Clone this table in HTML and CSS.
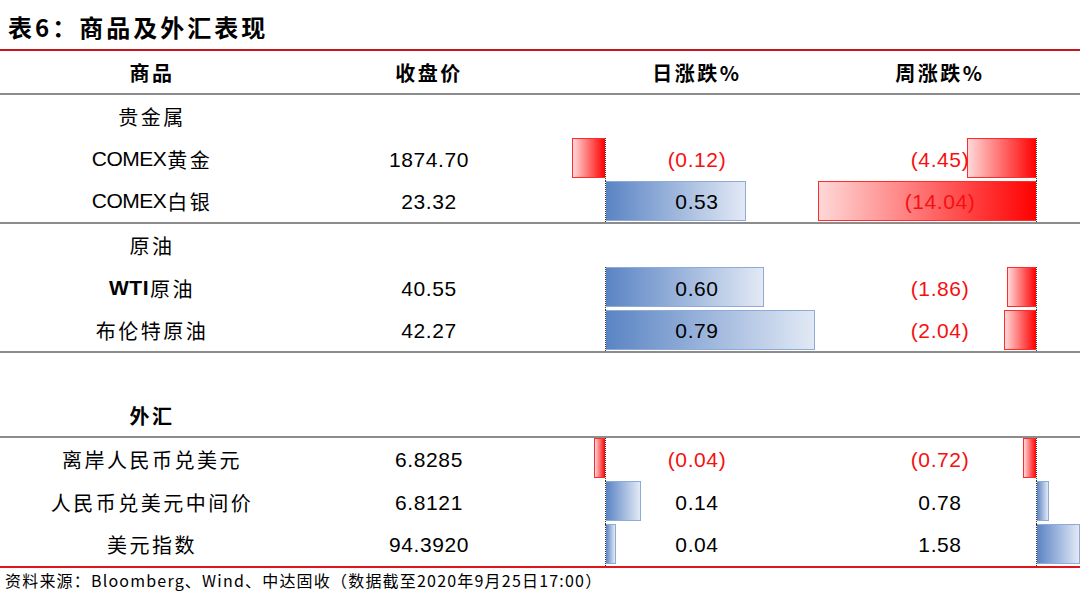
FILE: index.html
```html
<!DOCTYPE html>
<html lang="zh-CN">
<head>
<meta charset="utf-8">
<title>表6：商品及外汇表现</title>
<link rel="stylesheet" href="styles.css">
</head>
<body>
<div class="page">
  <div class="title">表6：商品及外汇表现</div>
  <div class="table">
    <div class="row head sep">
      <div class="c c1">商品</div>
      <div class="c c2">收盘价</div>
      <div class="c c3">日涨跌%</div>
      <div class="c c4">周涨跌%</div>
    </div>

    <div class="row">
      <div class="c c1 label">贵金属</div>
      <div class="c c2"></div><div class="c c3"></div><div class="c c4"></div>
    </div>
    <div class="row">
      <div class="c c1 label"><span class="lat">COMEX</span>黄金</div>
      <div class="c c2 num">1874.70</div>
      <div class="c c3 num red"><span class="axis"><span class="bar neg" style="width:33px"></span></span><span class="v">(0.12)</span></div>
      <div class="c c4 num red"><span class="axis"><span class="bar neg" style="width:69px"></span></span><span class="v">(4.45)</span></div>
    </div>
    <div class="row sep">
      <div class="c c1 label"><span class="lat">COMEX</span>白银</div>
      <div class="c c2 num">23.32</div>
      <div class="c c3 num"><span class="axis"><span class="bar pos" style="width:140px"></span></span><span class="v">0.53</span></div>
      <div class="c c4 num red"><span class="axis"><span class="bar neg" style="width:218px"></span></span><span class="v">(14.04)</span></div>
    </div>

    <div class="row">
      <div class="c c1 label">原油</div>
      <div class="c c2"></div><div class="c c3"></div><div class="c c4"></div>
    </div>
    <div class="row">
      <div class="c c1 label"><span class="lat bold">WTI</span>原油</div>
      <div class="c c2 num">40.55</div>
      <div class="c c3 num"><span class="axis"><span class="bar pos" style="width:158px"></span></span><span class="v">0.60</span></div>
      <div class="c c4 num red"><span class="axis"><span class="bar neg" style="width:29px"></span></span><span class="v">(1.86)</span></div>
    </div>
    <div class="row sep">
      <div class="c c1 label">布伦特原油</div>
      <div class="c c2 num">42.27</div>
      <div class="c c3 num"><span class="axis"><span class="bar pos" style="width:209px"></span></span><span class="v">0.79</span></div>
      <div class="c c4 num red"><span class="axis"><span class="bar neg" style="width:32px"></span></span><span class="v">(2.04)</span></div>
    </div>

    <div class="row blank"></div>
    <div class="row sep">
      <div class="c c1 head-label">外汇</div>
      <div class="c c2"></div><div class="c c3"></div><div class="c c4"></div>
    </div>

    <div class="row">
      <div class="c c1 label">离岸人民币兑美元</div>
      <div class="c c2 num">6.8285</div>
      <div class="c c3 num red"><span class="axis"><span class="bar neg" style="width:11px"></span></span><span class="v">(0.04)</span></div>
      <div class="c c4 num red"><span class="axis"><span class="bar neg" style="width:13px"></span></span><span class="v">(0.72)</span></div>
    </div>
    <div class="row">
      <div class="c c1 label">人民币兑美元中间价</div>
      <div class="c c2 num">6.8121</div>
      <div class="c c3 num"><span class="axis"><span class="bar pos" style="width:35px"></span></span><span class="v">0.14</span></div>
      <div class="c c4 num"><span class="axis"><span class="bar pos" style="width:12px"></span></span><span class="v">0.78</span></div>
    </div>
    <div class="row end">
      <div class="c c1 label">美元指数</div>
      <div class="c c2 num">94.3920</div>
      <div class="c c3 num"><span class="axis"><span class="bar pos" style="width:10px"></span></span><span class="v">0.04</span></div>
      <div class="c c4 num"><span class="axis"><span class="bar pos" style="width:43px"></span></span><span class="v">1.58</span></div>
    </div>
  </div>
  <div class="source">资料来源：Bloomberg、Wind、中达固收（数据截至2020年9月25日17:00）</div>
</div>
</body>
</html>
```

FILE: styles.css
```css
* { box-sizing: border-box; }
html, body { margin: 0; padding: 0; background: #fff; }
body {
  font-family: "Noto Sans CJK SC", "Noto Sans", sans-serif;
  color: #000;
}
.page { width: 1080px; height: 592px; overflow: hidden; }

.title {
  height: 51px;
  border-bottom: 2px solid #c8141e;
  padding: 8px 0 0 8px;
  font-size: 24px;
  line-height: 38px;
  font-weight: 700;
  letter-spacing: 3px;
  white-space: nowrap;
}

.table { display: flex; flex-direction: column; }
.row {
  display: grid;
  grid-template-columns: 304px 250px 286px 240px;
  height: 43px;
}
.row.head { height: 44px; }
.row.sep { border-bottom: 2px solid #8c8c8c; }
.row.end { border-bottom: 2px solid #e0161c; height: 44px; }
.row.blank { height: 42px; }

.c {
  position: relative;
  display: flex;
  align-items: center;
  justify-content: center;
  white-space: nowrap;
}
.c4 { padding-right: 40px; }

.head .c {
  font-weight: 700;
  font-size: 20px;
  letter-spacing: 2.5px;
}
.head-label {
  font-weight: 700;
  font-size: 20px;
  letter-spacing: 2.5px;
}
.label {
  font-size: 20px;
  letter-spacing: 2.5px;
  padding-bottom: 1px;
}
.lat {
  font-family: "Liberation Sans Narrow", "Liberation Sans", sans-serif;
  font-size: 21px;
  font-weight: 400;
  letter-spacing: -0.5px;
  margin-right: 1px;
}
.lat.bold { font-weight: 700; letter-spacing: 0.5px; }

.num {
  font-family: "Liberation Sans", "Noto Sans CJK SC", sans-serif;
  font-size: 21px;
  letter-spacing: 0.6px;
}
.red { color: #f51010; }
.v { position: relative; z-index: 2; }

.axis {
  position: absolute;
  top: 0;
  bottom: 0;
  width: 0;
  border-left: 1px dotted #333;
  z-index: 1;
}
.c3 .axis { left: 51px; }
.c4 .axis { left: 196px; }

.bar {
  position: absolute;
  top: 0;
  height: 40px;
}
.bar.pos {
  left: 0;
  background: linear-gradient(to right, #5a84c4, #e2e9f5);
  border: 1px solid #8eaad6;
  border-left: none;
}
.bar.neg {
  right: 1px;
  background: linear-gradient(to right, #ffd8d8, #ff0000);
  border: 1px solid #ff2a2a;
  border-right: none;
}

.source {
  height: 25px;
  padding-left: 5px;
  font-size: 16px;
  line-height: 25px;
  letter-spacing: 1.2px;
  white-space: nowrap;
}
```
